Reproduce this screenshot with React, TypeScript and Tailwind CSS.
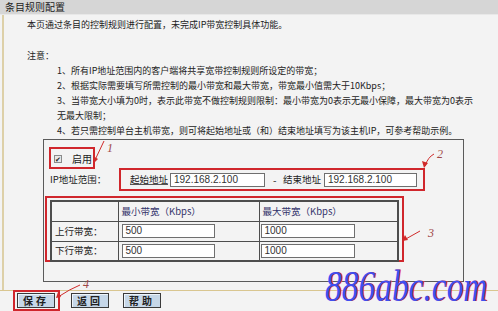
import React from "react";

const cjk = { fontFamily: '"Noto Sans CJK SC", "Noto Sans", sans-serif' };

const notes = [
  "1、所有IP地址范围内的客户端将共享宽带控制规则所设定的带宽；",
  "2、根据实际需要填写所需控制的最小带宽和最大带宽，带宽最小值需大于10Kbps；",
  "3、当带宽大小填为0时，表示此带宽不做控制规则限制：最小带宽为0表示无最小保障，最大带宽为0表示无最大限制；",
  "4、若只需控制单台主机带宽，则可将起始地址或（和）结束地址填写为该主机IP，可参考帮助示例。",
];

const Field = ({ value, w }: { value: string; w: string }) => (
  <div
    className={`${w} h-[14px] bg-white border border-[#6f6f6f] px-[3px] text-[10px] leading-[12px] text-[#333]`}
    style={{ fontFamily: '"Liberation Sans", Arial, sans-serif' }}
  >
    {value}
  </div>
);

const Btn = ({ label }: { label: string }) => (
  <div className="h-[15px] px-[5px] bg-[#c6d7e8] border border-[#3a3a3a] shadow-[inset_1px_1px_0_#eef4fa] text-[10px] leading-[13px] tracking-[3px] text-[#222] font-bold">
    {label}
  </div>
);

const Annotations = () => (
  <svg className="absolute left-0 top-0" width="498" height="311" viewBox="0 0 498 311">
    <g stroke="#d02a2a" strokeWidth="1" fill="none">
      <path d="M104 141 L95 160" />
      <path d="M434 154 Q428 157 425 166" />
      <path d="M420 231 L404 240" />
      <path d="M80 285 Q70 289 58 297" />
    </g>
    <g fill="#d02a2a">
      <path d="M94 163 L93 156 L98 159 Z" />
      <path d="M424 168 L422 161 L428 163 Z" />
      <path d="M402 241 L405 235 L408 240 Z" />
      <path d="M56 298 L58 292 L61 297 Z" />
    </g>
    <g fill="#a04848" fontFamily='"Liberation Serif", serif' fontStyle="italic" fontSize="12">
      <text x="107" y="152">1</text>
      <text x="437" y="158">2</text>
      <text x="428" y="237">3</text>
      <text x="83" y="288">4</text>
    </g>
  </svg>
);

export default function App() {
  return (
    <div className="relative w-[498px] h-[311px] overflow-hidden bg-[#f3f3f3] text-[#222]" style={cjk}>
      <div className="h-[15px] bg-[#d6d6d6] border-b border-[#e8e8e8] pl-[5px] text-[10px] leading-[14px]">
        条目规则配置
      </div>

      <div className="ml-[2px] h-[275px] border-l-2 border-[#ddd0a8] pl-[23px] text-[9px] leading-[15px]">
        <p className="pt-[2px]">本页通过条目的控制规则进行配置，未完成IP带宽控制具体功能。</p>
        <p className="mt-[16px]">注意：</p>
        <div className="pl-[30px] w-[452px]">
          {notes.map((n) => (
            <p key={n}>{n}</p>
          ))}
        </div>

        <div className="mt-[1px] ml-[16px] w-[421px] h-[143px] border border-[#5a5a5a]">
          <div className="mt-[7px] ml-[5px] w-[46px] h-[22px] border-2 border-[#d0262c] flex items-end pl-[3px] pb-[1px]">
            <div className="w-[8px] h-[8px] mb-[3px] border border-[#8a8a8a] bg-[#e8e8e8] flex items-center justify-center text-[7px] leading-none text-[#222]">
              ✔
            </div>
            <span className="ml-[10px] text-[10px] leading-[14px]">启用</span>
          </div>

          <div className="flex items-center -mt-[1px]">
            <span className="ml-[6px] w-[69px] text-[9.5px]">IP地址范围：</span>
            <div className="w-[306px] h-[23px] border-2 border-[#d0262c] flex items-center pl-[9px]">
              <span className="text-[9.5px] w-[40px]">
                <span className="underline decoration-[#555]">起始地址</span>
              </span>
              <Field value="192.168.2.100" w="w-[95px]" />
              <span className="ml-[8px] w-[10px] text-[10px]">-</span>
              <span className="text-[9.5px] w-[41px]">结束地址</span>
              <Field value="192.168.2.100" w="w-[93px]" />
            </div>
          </div>

          <div className="mt-[5px] ml-[1px] w-[359px] h-[66px] border-2 border-[#d0262c] pt-[2px] pl-[3px]">
            <table className="border-collapse border-2 border-[#4d4d4d] text-[9.5px]">
              <tbody>
                <tr className="h-[20px]">
                  <td className="w-[67px] border border-[#4d4d4d]"></td>
                  <td className="w-[141px] border border-[#4d4d4d] pl-[3px] text-[#33336b]">最小带宽（Kbps）</td>
                  <td className="w-[139px] border border-[#4d4d4d] pl-[3px] text-[#33336b]">最大带宽（Kbps）</td>
                </tr>
                {["上行带宽：", "下行带宽："].map((r) => (
                  <tr key={r} className="h-[20px]">
                    <td className="border border-[#4d4d4d] pl-[3px]">{r}</td>
                    <td className="border border-[#4d4d4d] pl-[3px]">
                      <Field value="500" w="w-[93px]" />
                    </td>
                    <td className="border border-[#4d4d4d] pl-[1px]">
                      <Field value="1000" w="w-[94px]" />
                    </td>
                  </tr>
                ))}
              </tbody>
            </table>
          </div>
        </div>
      </div>

      <div className="border-t border-[#d9c690] flex items-end gap-[11px] pl-[13px] h-[21px]">
        <div className="h-[21px] border-2 border-[#d0262c] flex items-center pl-[2px] pr-[3px]">
          <Btn label="保存" />
        </div>
        <div className="mb-[3px]">
          <Btn label="返回" />
        </div>
        <div className="mb-[3px] ml-[3px]">
          <Btn label="帮助" />
        </div>
      </div>

      <Annotations />

      <div
        className="absolute left-[325px] top-[262px] origin-left scale-x-[0.76] text-[44px] italic leading-[50px] text-[#3f4ff0] [text-shadow:1.5px_0_0_#e8323c]"
        style={{ fontFamily: '"Liberation Serif", serif' }}
      >
        886abc.com
      </div>
    </div>
  );
}
